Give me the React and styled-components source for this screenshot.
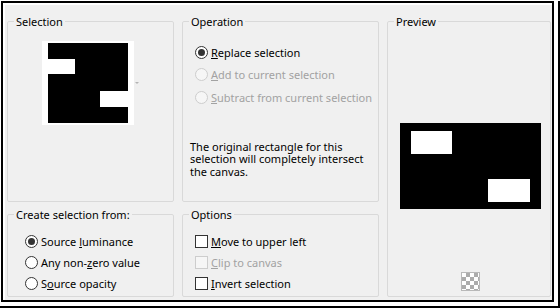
import React from 'react'
import styled, { createGlobalStyle } from 'styled-components'

const GlobalStyle = createGlobalStyle`
  html, body {
    margin: 0;
    padding: 0;
    background: #fff;
  }
  body {
    font-family: "Noto Sans", "Segoe UI", sans-serif;
    font-size: 11px;
    color: #000;
  }
`

const Page = styled.div`
  width: 560px;
  height: 308px;
  box-sizing: border-box;
  padding-top: 1px;
`

const Shadow = styled.div`
  width: 560px;
  height: 307px;
  box-sizing: border-box;
  padding: 0 4px 4px 1px;
  border-right: 2px solid #000;
  border-bottom: 2px solid #000;
`

const Dialog = styled.div`
  height: 100%;
  box-sizing: border-box;
  border: 2px solid #000;
  background: #f0f0f0;
  box-shadow: inset 2px 2px 0 #fff;
  padding: 11px 0 2px 4px;
  display: grid;
  grid-template-columns: 167px 197px 164px;
  grid-template-rows: 188px 90px;
  grid-template-areas:
    "sel op prev"
    "src opt prev";
  column-gap: 8px;
  row-gap: 5px;
`

const Group = styled.fieldset`
  grid-area: ${p => p.$area};
  margin: 0;
  padding: 0;
  min-width: 0;
  border: 1px solid #d9d9d9;
  border-radius: 2px;
  display: flex;
  flex-direction: column;
`

const Title = styled.legend`
  margin-left: 6px;
  padding: 0 2px;
  line-height: 15px;
  font-size: 11px;
`

const ThumbRow = styled.div`
  display: flex;
  align-items: center;
  gap: 1px;
  margin: 12px 0 0 34px;
`

const Thumb = styled.div`
  background: #fff;
  padding: 2px 6px;
  display: flex;
`

const DropArrow = styled.span`
  width: 0;
  height: 0;
  border-left: 2.5px solid transparent;
  border-right: 2.5px solid transparent;
  border-top: 2px solid #b4b4b4;
`

const Choices = styled.div`
  display: flex;
  flex-direction: column;
  padding: ${p => p.$pad};
`

const Choice = styled.label`
  display: flex;
  align-items: center;
  gap: 3px;
  height: ${p => p.$h}px;
  color: ${p => (p.$disabled ? '#a2a2a2' : '#000')};
  white-space: nowrap;
`

const Radio = styled.span`
  flex: none;
  width: 13px;
  height: 13px;
  box-sizing: border-box;
  border-radius: 50%;
  border: 1px solid ${p => (p.$disabled ? '#cdcdcd' : '#333')};
  background: ${p => (p.$disabled ? '#f6f6f6' : '#fff')};
  display: flex;
  align-items: center;
  justify-content: center;
  &::after {
    content: '';
    display: ${p => (p.$checked ? 'block' : 'none')};
    width: 7px;
    height: 7px;
    border-radius: 50%;
    background: #333;
  }
`

const Check = styled.span`
  flex: none;
  width: 13px;
  height: 13px;
  box-sizing: border-box;
  border: 1px solid ${p => (p.$disabled ? '#cdcdcd' : '#333')};
  background: ${p => (p.$disabled ? '#f6f6f6' : '#fff')};
`

const Key = styled.u`
  text-underline-offset: 1px;
`

const Note = styled.p`
  margin: 32px 0 0;
  padding: 0 0 0 7px;
  line-height: 12.5px;
  white-space: nowrap;
`

const PreviewBody = styled.div`
  flex: 1;
  display: flex;
  flex-direction: column;
  align-items: center;
  padding: 94px 0 5px 3px;
`

const Checker = styled.span`
  margin-top: auto;
  width: 19px;
  height: 19px;
  box-sizing: border-box;
  border: 1px solid #b8b8b8;
  background: repeating-conic-gradient(#acacac 0 25%, #fff 0 50%) 0 0 / 8px 8px;
`

const operations = [
  { text: 'Replace selection', key: 0, checked: true },
  { text: 'Add to current selection', key: 0, disabled: true },
  { text: 'Subtract from current selection', key: 0, disabled: true }
]

const sources = [
  { text: 'Source luminance', key: 7, checked: true },
  { text: 'Any non-zero value', key: 8 },
  { text: 'Source opacity', key: 1 }
]

const options = [
  { text: 'Move to upper left', key: 0 },
  { text: 'Clip to canvas', key: 0, disabled: true },
  { text: 'Invert selection', key: 0 }
]

const Label = ({ text, at }) => (
  <span>
    {text.slice(0, at)}
    <Key>{text[at]}</Key>
    {text.slice(at + 1)}
  </span>
)

const App = () => (
  <Page>
    <GlobalStyle />
    <Shadow>
      <Dialog>
        <Group $area="sel">
          <Title>Selection</Title>
          <ThumbRow>
            <Thumb>
              <svg width="80" height="80" viewBox="0 0 80 80">
                <rect width="80" height="80" fill="#000" />
                <rect x="0" y="16" width="27" height="15" fill="#fff" />
                <rect x="52" y="48" width="28" height="16" fill="#fff" />
              </svg>
            </Thumb>
            <DropArrow />
          </ThumbRow>
        </Group>

        <Group $area="op">
          <Title>Operation</Title>
          <Choices $pad="12px 0 0 12px">
            {operations.map(o => (
              <Choice key={o.text} $h={22.5} $disabled={o.disabled}>
                <Radio $checked={o.checked} $disabled={o.disabled} />
                <Label text={o.text} at={o.key} />
              </Choice>
            ))}
          </Choices>
          <Note>
            The original rectangle for this<br />
            selection will completely intersect<br />
            the canvas.
          </Note>
        </Group>

        <Group $area="prev">
          <Title>Preview</Title>
          <PreviewBody>
            <svg width="141" height="86" viewBox="0 0 141 86">
              <rect width="141" height="86" fill="#000" />
              <rect x="11" y="8" width="41" height="23" fill="#fff" />
              <rect x="88" y="56" width="42" height="23" fill="#fff" />
            </svg>
            <Checker />
          </PreviewBody>
        </Group>

        <Group $area="src">
          <Title>Create selection from:</Title>
          <Choices $pad="9px 0 0 17px">
            {sources.map(o => (
              <Choice key={o.text} $h={21.2}>
                <Radio $checked={o.checked} />
                <Label text={o.text} at={o.key} />
              </Choice>
            ))}
          </Choices>
        </Group>

        <Group $area="opt">
          <Title>Options</Title>
          <Choices $pad="9px 0 0 12px">
            {options.map(o => (
              <Choice key={o.text} $h={21.2} $disabled={o.disabled}>
                <Check $disabled={o.disabled} />
                <Label text={o.text} at={o.key} />
              </Choice>
            ))}
          </Choices>
        </Group>
      </Dialog>
    </Shadow>
  </Page>
)

export default App
